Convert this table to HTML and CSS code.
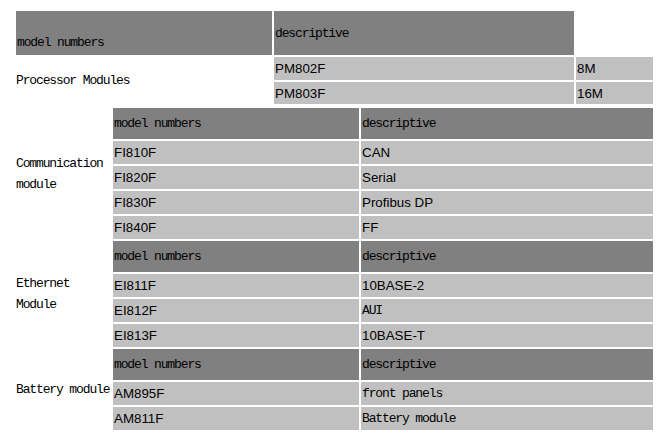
FILE: index.html
```html
<!DOCTYPE html>
<html>
<head>
<meta charset="utf-8">
<link rel="stylesheet" href="styles.css">
</head>
<body>
<div class="page">
  <div class="proc">
    <div class="cell head head-low mono">model numbers</div>
    <div class="cell head mono">descriptive</div>
    <div class="blank"></div>
    <div class="label label-proc mono">Processor Modules</div>
    <div class="cell data sans">PM802F</div>
    <div class="cell data sans">8M</div>
    <div class="cell data sans">PM803F</div>
    <div class="cell data sans">16M</div>
  </div>

  <div class="group">
    <div class="label mono">Communication module</div>
    <div class="sub">
      <div class="cell head mono">model numbers</div>
      <div class="cell head mono">descriptive</div>
      <div class="cell data sans">FI810F</div>
      <div class="cell data sans">CAN</div>
      <div class="cell data sans">FI820F</div>
      <div class="cell data sans">Serial</div>
      <div class="cell data sans">FI830F</div>
      <div class="cell data sans">Profibus DP</div>
      <div class="cell data sans">FI840F</div>
      <div class="cell data sans">FF</div>
    </div>
  </div>

  <div class="group">
    <div class="label mono">Ethernet Module</div>
    <div class="sub">
      <div class="cell head mono">model numbers</div>
      <div class="cell head mono">descriptive</div>
      <div class="cell data sans">EI811F</div>
      <div class="cell data sans">10BASE-2</div>
      <div class="cell data sans">EI812F</div>
      <div class="cell data mono">AUI</div>
      <div class="cell data sans">EI813F</div>
      <div class="cell data sans">10BASE-T</div>
    </div>
  </div>

  <div class="group">
    <div class="label mono">Battery module</div>
    <div class="sub">
      <div class="cell head mono">model numbers</div>
      <div class="cell head mono">descriptive</div>
      <div class="cell data sans">AM895F</div>
      <div class="cell data mono">front panels</div>
      <div class="cell data sans">AM811F</div>
      <div class="cell data mono">Battery module</div>
    </div>
  </div>
</div>
</body>
</html>
```

FILE: styles.css
```css
html, body {
  margin: 0;
  padding: 0;
  background: #ffffff;
  color: #000000;
}

.page {
  padding: 11px 0 0 16px;
  width: 637px;
  display: flex;
  flex-direction: column;
}

.mono {
  font-family: "Liberation Mono", "Courier New", monospace;
  font-size: 13px;
  letter-spacing: -1.13px;
}

.sans {
  font-family: "Liberation Sans", Arial, sans-serif;
  font-size: 13.33px;
}

.proc {
  display: grid;
  grid-template-columns: 256px 300px 77px;
  grid-template-rows: 44px 23px 22px;
  column-gap: 2px;
  row-gap: 2px;
  margin-bottom: 4px;
}

.group {
  display: grid;
  grid-template-columns: 95px 540px;
  column-gap: 2px;
  margin-bottom: 2px;
}

.sub {
  display: grid;
  grid-template-columns: 246px 292px;
  grid-template-rows: 31px;
  grid-auto-rows: 23px;
  column-gap: 2px;
  row-gap: 2px;
}

.cell {
  display: flex;
  align-items: center;
  padding-left: 1px;
  white-space: nowrap;
  overflow: hidden;
}

.head {
  background: #808080;
}

.data {
  background: #c0c0c0;
}

.head-low {
  align-items: flex-end;
  padding-bottom: 5px;
}

.label {
  display: flex;
  align-items: center;
  line-height: 21px;
}

.label-proc {
  grid-row: 2 / span 2;
  grid-column: 1;
  white-space: nowrap;
}
```
